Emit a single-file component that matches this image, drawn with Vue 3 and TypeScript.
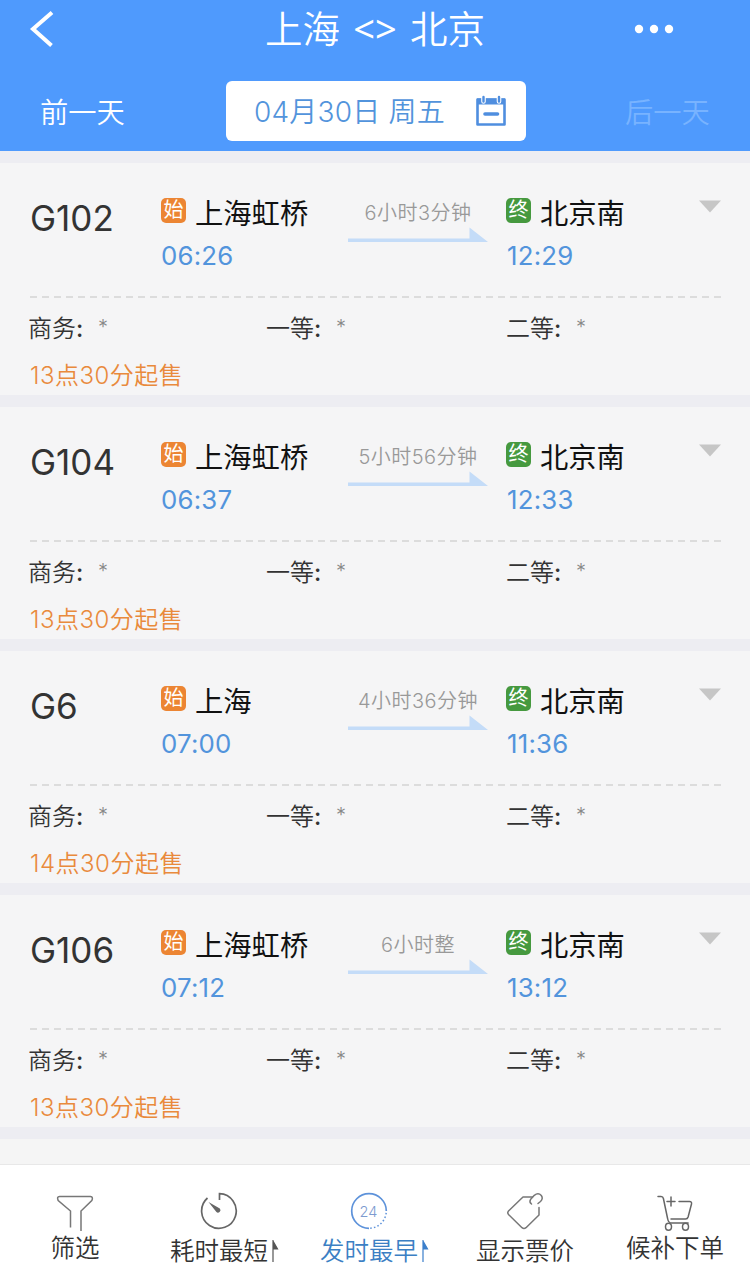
<script setup lang="ts">
interface Train {
  no: string
  from: string
  depart: string
  duration: string
  to: string
  arrive: string
  sale: string
}

const trains: Train[] = [
  { no: 'G102', from: '上海虹桥', depart: '06:26', duration: '6小时3分钟', to: '北京南', arrive: '12:29', sale: '13点30分起售' },
  { no: 'G104', from: '上海虹桥', depart: '06:37', duration: '5小时56分钟', to: '北京南', arrive: '12:33', sale: '13点30分起售' },
  { no: 'G6', from: '上海', depart: '07:00', duration: '4小时36分钟', to: '北京南', arrive: '11:36', sale: '14点30分起售' },
  { no: 'G106', from: '上海虹桥', depart: '07:12', duration: '6小时整', to: '北京南', arrive: '13:12', sale: '13点30分起售' },
]

const seats: string[] = ['商务', '一等', '二等']
</script>

<template>
  <div class="screen">
    <header class="header">
      <div class="title-row">
        <svg class="back" width="28" height="38" viewBox="0 0 28 38"><path d="M25 2.500 6 19l18.500 16.500" fill="none" stroke="#fff" stroke-width="4" /></svg>
        <h1 class="title"><span>上海</span><span class="swap">&lt;&gt;</span><span>北京</span></h1>
        <svg class="more" width="40" height="10" viewBox="0 0 40 10" fill="#fff">
          <circle cx="5" cy="5" r="4.200" /><circle cx="20" cy="5" r="4.200" /><circle cx="35" cy="5" r="4.200" />
        </svg>
      </div>
      <div class="date-row">
        <span class="day">前一天</span>
        <div class="date-pill">
          <span class="date">04月30日 周五</span>
          <svg width="32" height="32" viewBox="0 0 32 32">
            <path d="M2.500 4.500h27v25h-27z" fill="none" stroke="#4f8edf" stroke-width="2.600" stroke-linejoin="round" />
            <path d="M2 3.500h28v6H2z" fill="#4f8edf" />
            <path d="M8.500 1v5.500M24 1v5.500" stroke="#fff" stroke-width="4.600" stroke-linecap="round" />
            <path d="M8.500 2v4.500M24 2v4.500" stroke="#4f8edf" stroke-width="2.400" stroke-linecap="round" />
            <path d="M10 19h12.500" stroke="#4f8edf" stroke-width="3.600" stroke-linecap="round" />
          </svg>
        </div>
        <span class="day disabled">后一天</span>
      </div>
    </header>

    <main class="list">
      <article v-for="t in trains" :key="t.no" class="card">
        <div class="trip">
          <div class="no">{{ t.no }}</div>
          <div class="stop">
            <div class="station"><i class="badge start">始</i>{{ t.from }}</div>
            <div class="time">{{ t.depart }}</div>
          </div>
          <div class="duration">
            <span>{{ t.duration }}</span>
            <svg width="140" height="16" viewBox="0 0 140 16"><path d="M0 11.500h121.500V.5L140 15H0z" fill="#c4dcf8" /></svg>
          </div>
          <div class="stop">
            <div class="station"><i class="badge end">终</i>{{ t.to }}</div>
            <div class="time">{{ t.arrive }}</div>
          </div>
          <svg class="caret" width="24" height="13" viewBox="0 0 24 13"><path d="M1 .5h22L12 12.500z" fill="#c6c6c6" /></svg>
        </div>
        <div class="divider"></div>
        <div class="seats">
          <div v-for="s in seats" :key="s" class="seat">{{ s }}<span class="colon">:</span><span class="star">*</span></div>
        </div>
        <div class="sale">{{ t.sale }}</div>
      </article>
      <div class="next"></div>
    </main>

    <nav class="tabs">
      <div class="tab raised">
        <svg width="40" height="40" viewBox="0 0 40 40" fill="none" stroke="#777" stroke-width="1.500">
          <path d="M15.500 36.500V20L3.200 9.600Q1.500 5.500 4.500 5.500h31q3 .5 1.300 4.100L26 20v20" />
        </svg>
        <span class="label">筛选</span>
      </div>
      <div class="tab">
        <svg class="lead" width="40" height="40" viewBox="0 0 40 40" fill="none" stroke="#666" stroke-width="1.700">
          <path d="M20.500 9V2.700A17.300 17.300 0 1 1 8.500 7" />
          <path d="M9.500 11 20.800 17.600a2.400 2.400 0 1 1-3.600 3.200z" fill="#666" stroke="none" />
        </svg>
        <span class="label shifted">耗时最短<svg class="flag" width="8" height="22" viewBox="0 0 8 22"><path d="M2 0v22M2 1l4.500 8H2" fill="#555" stroke="#555" stroke-width="1.200" /></svg></span>
      </div>
      <div class="tab active">
        <svg class="lead" width="40" height="40" viewBox="0 0 40 40" fill="none" stroke="#5d92da" stroke-width="1.700">
          <path d="M37.300 20A17.300 17.300 0 1 0 20 37.300" />
          <path d="M37.300 20A17.300 17.300 0 0 1 20 37.300" stroke-width="1.500" stroke-dasharray="1.500 2.200" stroke-dashoffset="-2" />
          <text x="19.500" y="25.500" text-anchor="middle" class="hours">24</text>
        </svg>
        <span class="label shifted">发时最早<svg class="flag" width="8" height="22" viewBox="0 0 8 22"><path d="M2 0v22M2 1l4.500 8H2" fill="#3b7fcb" stroke="#3b7fcb" stroke-width="1.200" /></svg></span>
      </div>
      <div class="tab">
        <svg width="40" height="40" viewBox="0 0 40 40" fill="none" stroke="#777" stroke-width="1.500" stroke-linecap="round" stroke-linejoin="round">
          <path d="M27.500 6H18L3.500 20q-1.500 1.800 0 3.500L17 36.700q2 1.500 4 0L34 24v-7.500" />
          <path d="M26.500 13q-2.500-1.800-1-4.500l3.800-4.200q4-3.200 7 .2 2.200 3.200-.8 6L33 12.500" />
        </svg>
        <span class="label">显示票价</span>
      </div>
      <div class="tab raised">
        <svg width="40" height="40" viewBox="0 0 40 40" fill="none" stroke="#666" stroke-width="1.500" stroke-linecap="round" stroke-linejoin="round">
          <path d="M3 5.500h3q2 0 2.400 2l4.200 20q.7 4.500 4 4.500h16.500M16 28h14.500q2 0 2.600-2L36.500 13q.5-2.500-2-2.500H24M12 10.500h8M16 6v9" />
          <ellipse cx="13.500" cy="35.700" rx="3" ry="3.500" /><ellipse cx="30.500" cy="35.700" rx="3" ry="3.500" />
        </svg>
        <span class="label">候补下单</span>
      </div>
    </nav>
  </div>
</template>

<style>
body {
  margin: 0;
}
</style>

<style scoped>
.screen {
  width: 750px;
  height: 1278px;
  overflow: hidden;
  display: flex;
  flex-direction: column;
  background: #f5f5f6;
  color: #333;
  font-family: Inter, "Noto Sans CJK SC", sans-serif;
  font-weight: 350;
}
.header {
  flex: none;
  height: 151px;
  background: #4f9afd;
  color: #fff;
}
.title-row {
  height: 59px;
  display: grid;
  grid-template-columns: 265px 220px 1fr;
  grid-template-rows: 58px;
  align-items: center;
}
.back {
  margin-left: 27px;
  margin-top: -1px;
}
.title {
  margin: 0;
  padding-top: 1px;
  display: flex;
  align-items: center;
  justify-content: space-between;
  font-size: 37.500px;
  line-height: 56px;
  font-weight: 350;
}
.swap {
  margin-top: -4px;
  font-size: 38px;
  font-weight: 400;
  font-family: "Noto Sans", sans-serif;
}
.more {
  margin-left: 149px;
}
.date-row {
  margin-top: 22px;
  display: grid;
  grid-template-columns: 226px 300px 1fr;
  height: 60px;
  align-items: center;
}
.day {
  margin-top: -2px;
  padding-left: 40px;
  font-size: 28.300px;
}
.day.disabled {
  padding-left: 99px;
  color: #78b3ff;
}
.date-pill {
  box-sizing: border-box;
  height: 60px;
  padding: 0 19px 1px 28px;
  border-radius: 6px;
  background: #fff;
  display: flex;
  align-items: center;
  justify-content: space-between;
}
.date {
  margin-top: -1px;
  color: #5294dc;
  font-size: 28px;
  letter-spacing: .2px;
  white-space: nowrap;
}
.list {
  flex: none;
  height: 1013px;
  background: #ededf2;
  padding-top: 12px;
  box-sizing: border-box;
  display: flex;
  flex-direction: column;
  gap: 12px;
}
.card {
  flex: none;
  box-sizing: border-box;
  height: 232px;
  padding: 0 29px;
  background: #f5f5f6;
}
.next {
  flex: 1;
  background: #f5f5f5;
}
.trip {
  height: 133px;
  display: grid;
  grid-template-columns: 132px 187px 140px 18px 192px 24px;
  align-items: start;
}
.no {
  padding: 33px 0 0 1px;
  font-size: 35px;
  line-height: 44px;
  font-weight: 400;
}
.stop {
  padding-top: 28px;
}
.stop + .duration + .stop {
  grid-column: 5;
}
.station {
  display: flex;
  align-items: center;
  height: 40px;
  font-size: 28.300px;
  color: #111;
  font-weight: 400;
  white-space: nowrap;
}
.badge {
  width: 25px;
  height: 25px;
  margin: 0 9px 2px 0;
  border-radius: 5px;
  color: #fff;
  font-size: 20px;
  line-height: 25px;
  font-style: normal;
  text-align: center;
}
.start {
  background: #ec8533;
}
.end {
  background: #46993f;
}
.time {
  height: 40px;
  margin-top: 5px;
  font-size: 25.800px;
  line-height: 40px;
  font-weight: 400;
  letter-spacing: .2px;
  color: #5294dc;
}
.stop + .duration + .stop .time {
  padding-left: 1px;
}
.duration {
  display: flex;
  flex-direction: column;
  align-items: center;
  padding-top: 37px;
  font-size: 20px;
  line-height: 27px;
  letter-spacing: .45px;
  color: #999;
}
.caret {
  grid-column: 6;
  margin-top: 37px;
}
.divider {
  height: 2px;
  margin: 0 0 0 1px;
  background: repeating-linear-gradient(90deg, #dcdcdc 0 7px, transparent 7px 12px);
}
.seats {
  display: grid;
  grid-template-columns: 238px 240px 1fr;
  height: 60px;
  align-items: center;
  font-size: 24px;
}
.seat {
  height: 38px;
  line-height: 38px;
  margin: 2px 0 0 -1px;
}
.colon {
  display: inline-block;
  width: 8px;
  font-weight: 500;
}
.star {
  position: relative;
  top: -3px;
  margin-left: 14px;
  color: #888;
  font-size: 20px;
}
.sale {
  padding-left: 1px;
  font-size: 24px;
  line-height: 36px;
  letter-spacing: .5px;
  color: #e98a3c;
}
.tabs {
  flex: 1;
  box-sizing: border-box;
  border-top: 1px solid #e8e8e8;
  background: #fff;
  display: grid;
  grid-template-columns: repeat(5, 1fr);
}
.tab {
  display: flex;
  flex-direction: column;
  align-items: center;
  padding-top: 26px;
}
.lead {
  margin-right: 13px;
}
.label {
  display: flex;
  align-items: center;
  font-size: 24.500px;
  line-height: 40px;
}
.raised .label {
  margin-top: -3px;
}
.label.shifted {
  margin-right: 1px;
}
.flag {
  margin-left: 3px;
}
.active {
  color: #3b7fc4;
}
.hours {
  font-size: 14.500px;
  fill: #7d9bd0;
  stroke: none;
}
</style>
